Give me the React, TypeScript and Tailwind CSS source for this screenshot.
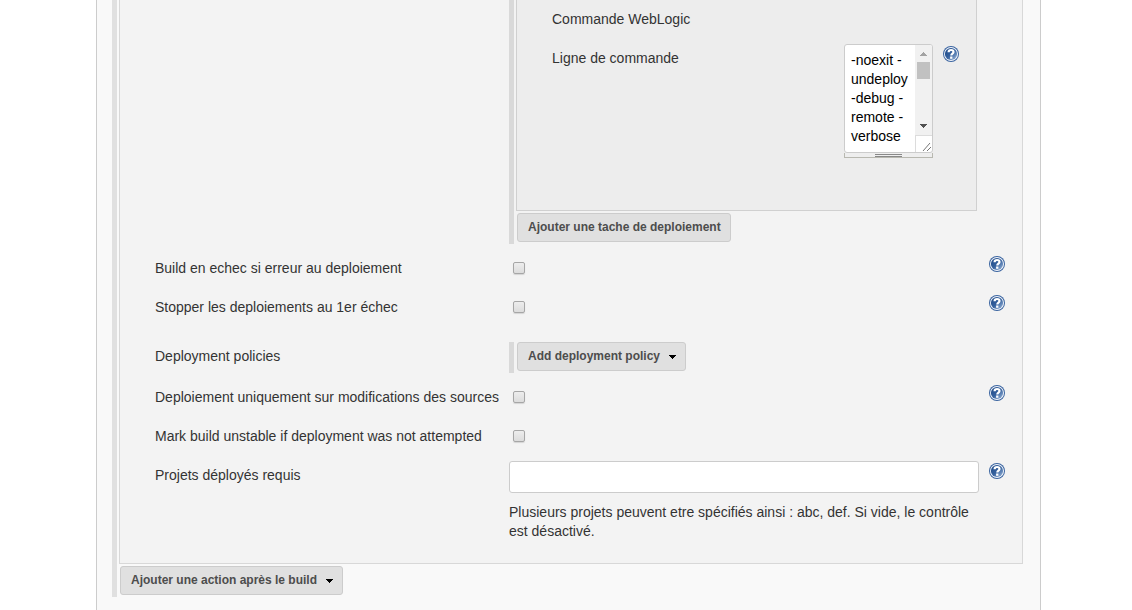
import type { ReactNode } from 'react';

function HelpIcon() {
  return (
    <svg viewBox="0 0 16 16" className="size-4" aria-hidden="true">
      <defs>
        <linearGradient id="help-fill" x1="0" y1="0" x2="1" y2="1">
          <stop offset="0" stopColor="#1f4a88" />
          <stop offset="0.5" stopColor="#34609d" />
          <stop offset="1" stopColor="#a3bddf" />
        </linearGradient>
      </defs>
      <circle cx="8" cy="8" r="8" fill="#3a64a0" />
      <circle cx="8" cy="8" r="7" fill="#f4f7fb" />
      <circle cx="8" cy="8" r="6.1" fill="url(#help-fill)" />
      <path d="M5.6 6.2C5.6 4.7 6.6 4 8.1 4s2.4.7 2.4 1.9c0 1.7-2.2 1.7-2.2 3.6" fill="none" stroke="#fff" strokeWidth="2.2" />
      <rect x="7.1" y="10.5" width="2.3" height="2.3" fill="#fff" />
    </svg>
  );
}

function Help({ topic }: { topic: string }) {
  return (
    <a href="#help" aria-label={`Aide : ${topic}`} className="ml-2.5 mt-[7px] block size-4 shrink-0">
      <HelpIcon />
    </a>
  );
}

function PushButton({ children, menu = false }: { children: ReactNode; menu?: boolean }) {
  return (
    <button
      type="button"
      className="ml-px flex h-[29px] items-center rounded-[3px] border border-[#cccccc] bg-[#e0e0e0] pr-[9px] pb-0.5 pl-2.5 text-xs font-bold whitespace-nowrap text-[#4d4d4d]"
    >
      {children}
      {menu && (
        <svg viewBox="0 0 7 4" className="mt-[3px] ml-[9px] h-1 w-[7px]" shapeRendering="crispEdges" aria-hidden="true">
          <path d="M0 0h7v1H6v1H5v1H4v1H3V3H2V2H1V1H0z" fill="#000" />
        </svg>
      )}
    </button>
  );
}

function CheckRow({ id, label, help = false }: { id: string; label: string; help?: boolean }) {
  return (
    <div className="flex">
      <label htmlFor={id} className="w-[354px] shrink-0 py-2.5 whitespace-nowrap">
        {label}
      </label>
      <div className="flex-1 pt-[13px] pl-1">
        <input
          id={id}
          type="checkbox"
          className="block h-3 w-3 appearance-none rounded-[2px] border border-[#a6a6a6] bg-linear-to-b from-[#ededed] to-[#dcdcdc] shadow-[0_1px_1px_#d4d4d4] checked:bg-[#555555]"
        />
      </div>
      {help ? <Help topic={label} /> : <span className="ml-2.5 w-4" />}
    </div>
  );
}

function CommandField() {
  return (
    <div className="w-[89px]">
      <div className="flex h-[109px] overflow-hidden rounded-[3px] border border-[#cccccc] bg-white">
        <textarea
          id="command-line"
          defaultValue="-noexit -undeploy -debug -remote -verbose"
          className="block h-full w-[70px] resize-none overflow-hidden pt-1.5 pl-1.5 leading-[19px] text-black outline-none"
        />
        <svg viewBox="0 0 17 107" className="h-[107px] w-[17px] shrink-0" shapeRendering="crispEdges" aria-hidden="true">
          <rect width="17" height="91" fill="#f1f1f1" />
          <path d="M8 7h1v1h1v1h1v1h1v1H5v-1h1V9h1V8h1z" fill="#a3a3a3" />
          <rect x="2" y="17" width="13" height="17" fill="#c1c1c1" />
          <path d="M5 79h7v1h-1v1h-1v1H9v1H8v-1H7v-1H6v-1H5z" fill="#505050" />
          <path d="M0 90h17v1H1v16H0z" fill="#dcdcdc" />
          <path d="M8 106l7-8M12 106l4-4" stroke="#777" fill="none" shapeRendering="auto" />
        </svg>
      </div>
      <div className="flex h-[5px] justify-center border-x border-b border-[#b8b8b0] bg-[#eeeeee] pt-px">
        <span className="h-[3px] w-[27px] border-y border-[#888888] bg-[#eeeeee]" />
      </div>
    </div>
  );
}

export default function App() {
  return (
    <div className="min-h-screen bg-white pr-[91px] pl-24 font-['Liberation_Sans',Arial,sans-serif] text-sm leading-[19px] text-[#333333]">
      <main className="min-h-screen border-x border-[#cccccc] bg-[#f9f9f9] pr-[17px] pl-[15px]">
        <div className="border-l-5 border-[#e0e0e0] pb-0.5 pl-0.5">
          <section className="mb-0.5 border-x border-b border-[#d8d8d8] bg-[#f3f3f3] pr-[17px] pb-[22px] pl-[35px]">
            <div className="mb-[5px] flex">
              <div className="w-[354px] shrink-0" />
              <div className="flex-1 border-l-5 border-[#d9d9d9] pr-0.5 pb-0.5 pl-0.5">
                <div className="mb-0.5 border-x border-b border-[#d0d0d0] bg-[#ededed] pr-[17px] pb-[52px] pl-[35px]">
                  <div className="py-2.5">Commande WebLogic</div>
                  <div className="flex">
                    <label htmlFor="command-line" className="flex-1 py-2.5">
                      Ligne de commande
                    </label>
                    <div className="pt-[5px]">
                      <CommandField />
                    </div>
                    <Help topic="Ligne de commande" />
                  </div>
                </div>
                <PushButton>Ajouter une tache de deploiement</PushButton>
              </div>
              <span className="ml-2.5 w-4" />
            </div>

            <CheckRow id="fail-build" label="Build en echec si erreur au deploiement" help />
            <CheckRow id="stop-first" label="Stopper les deploiements au 1er échec" help />

            <div className="flex pt-[15px] pb-[5px]">
              <div className="w-[354px] shrink-0 pt-[5px]">Deployment policies</div>
              <div className="flex-1 border-l-5 border-[#d9d9d9] pb-0.5 pl-0.5">
                <PushButton menu>Add deployment policy</PushButton>
              </div>
            </div>

            <CheckRow id="only-changes" label="Deploiement uniquement sur modifications des sources" help />
            <CheckRow id="mark-unstable" label="Mark build unstable if deployment was not attempted" />

            <div className="flex">
              <label htmlFor="projects" className="w-[354px] shrink-0 py-2.5">
                Projets déployés requis
              </label>
              <div className="flex-1 pt-[5px]">
                <input
                  id="projects"
                  type="text"
                  className="block h-8 w-full rounded-[3px] border border-[#cccccc] bg-white px-1.5 text-black"
                />
                <p className="mt-2.5">
                  Plusieurs projets peuvent etre spécifiés ainsi : abc, def. Si vide, le contrôle est désactivé.
                </p>
              </div>
              <Help topic="Projets déployés requis" />
            </div>
          </section>
          <PushButton menu>Ajouter une action après le build</PushButton>
        </div>
      </main>
    </div>
  );
}
